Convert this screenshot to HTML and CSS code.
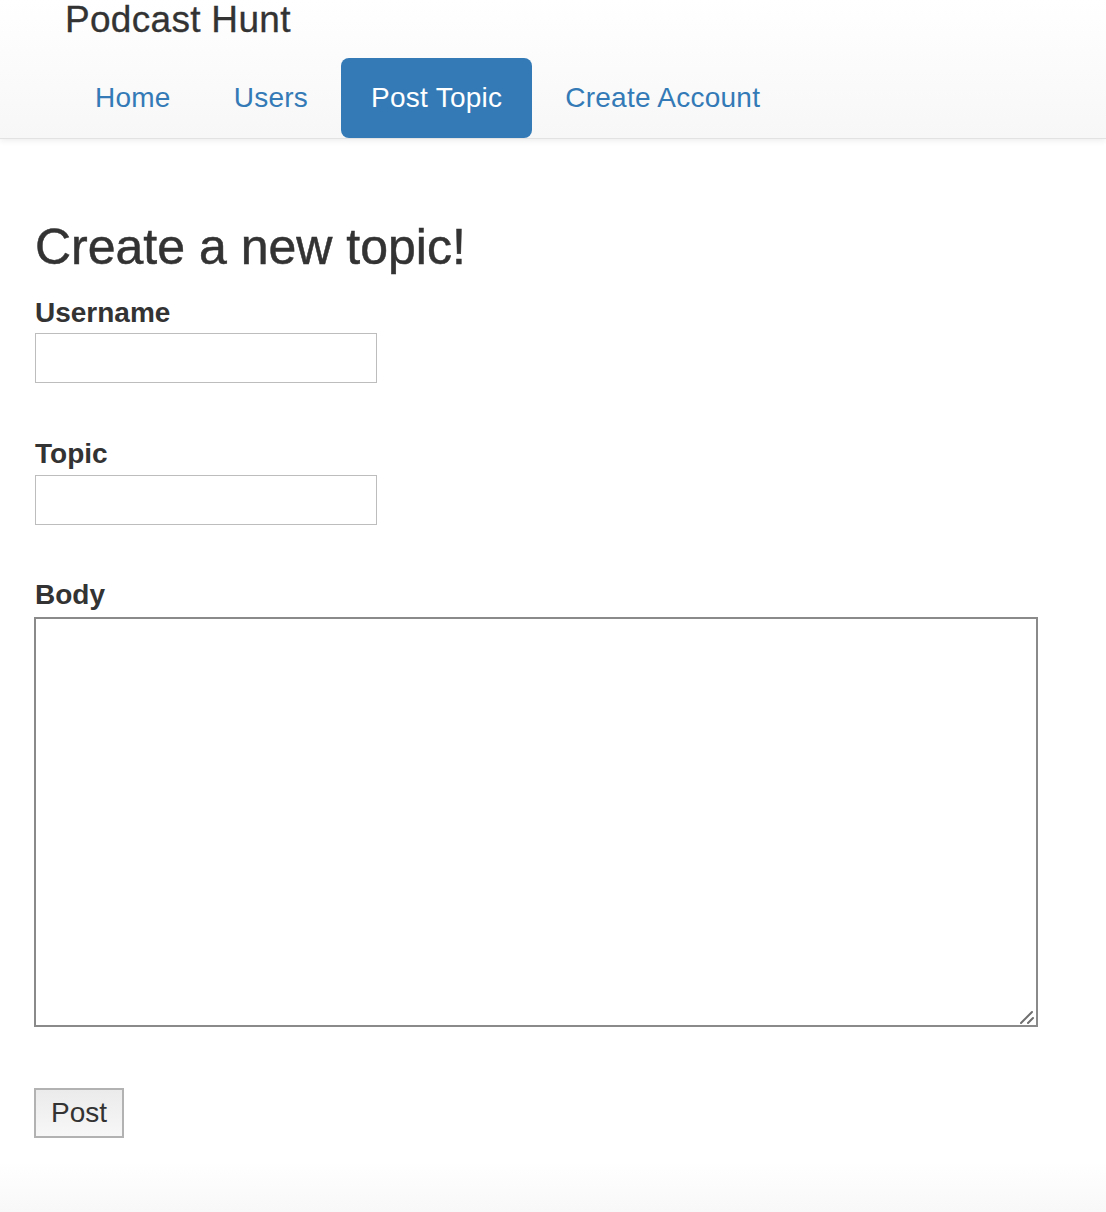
FILE: index.html
```html
<!DOCTYPE html>
<html lang="en">
<head>
<meta charset="utf-8">
<title>Podcast Hunt</title>
<link rel="stylesheet" href="styles.css">
</head>
<body>
<header class="navbar">
  <div class="brand">Podcast Hunt</div>
  <nav class="nav">
    <a class="nav-link" href="#">Home</a>
    <a class="nav-link" href="#">Users</a>
    <a class="nav-link active" href="#">Post Topic</a>
    <a class="nav-link" href="#">Create Account</a>
  </nav>
</header>
<main class="content">
  <h1 class="title">Create a new topic!</h1>
  <form class="topic-form">
    <label class="label first" for="username">Username</label>
    <input class="field" id="username" type="text">
    <label class="label" for="topic">Topic</label>
    <input class="field" id="topic" type="text">
    <label class="label body-label" for="body">Body</label>
    <div class="body-wrap">
      <textarea class="body-field" id="body"></textarea>
      <svg class="grip" width="14" height="14" viewBox="0 0 14 14" aria-hidden="true">
        <line x1="1" y1="13" x2="12" y2="2" stroke="#6f6f6f" stroke-width="2" stroke-linecap="round"/>
        <line x1="8" y1="13" x2="13" y2="8" stroke="#6f6f6f" stroke-width="2" stroke-linecap="round"/>
      </svg>
    </div>
    <button class="post-btn" type="submit">Post</button>
  </form>
</main>
<footer class="footer"></footer>
</body>
</html>
```

FILE: styles.css
```css
html, body {
  margin: 0;
  padding: 0;
  background: #fff;
}
body {
  font-family: "Liberation Sans", Arial, Helvetica, sans-serif;
  color: #333;
}
.navbar {
  height: 138px;
  background: linear-gradient(to bottom, #ffffff 0%, #f7f7f7 100%);
  border-bottom: 1px solid #e2e2e2;
  box-shadow: 0 2px 6px rgba(0, 0, 0, 0.07);
}
.brand {
  height: 58px;
  padding-left: 65px;
  font-size: 37px;
  line-height: 40px;
  letter-spacing: 0.3px;
  color: #333;
  -webkit-text-stroke: 0.3px #333;
}
.nav {
  display: flex;
  gap: 3px;
  padding-left: 65px;
}
.nav-link {
  display: block;
  padding: 20px 30px;
  font-size: 28px;
  line-height: 40px;
  letter-spacing: 0.25px;
  color: #337ab7;
  text-decoration: none;
  border-radius: 8px;
}
.nav-link.active {
  background: #337ab7;
  color: #fff;
}
.content {
  padding-left: 35px;
}
.title {
  margin: 81px 0 0;
  font-size: 50px;
  line-height: 55px;
  font-weight: normal;
  color: #333;
  -webkit-text-stroke: 0.5px #333;
}
.topic-form {
  display: flex;
  flex-direction: column;
  align-items: flex-start;
}
.label {
  display: block;
  margin-top: 51px;
  font-size: 28px;
  line-height: 40px;
  font-weight: bold;
  color: #333;
}
.label.first {
  margin-top: 18px;
}
.field {
  box-sizing: border-box;
  width: 342px;
  height: 50px;
  margin: 1px 0 0;
  border: 1px solid #bdbdbd;
  padding: 0 8px;
  font-size: 28px;
  background: #fff;
  outline: none;
}
.label.first + .field {
  margin-top: 0;
}
.label.body-label {
  margin-top: 50px;
}
.body-wrap {
  position: relative;
  margin: 2px 0 0 -1px;
  line-height: 0;
}
.body-field {
  display: block;
  box-sizing: border-box;
  width: 1004px;
  height: 410px;
  margin: 0;
  border: 2px solid #8a8a8a;
  padding: 4px;
  font-size: 28px;
  background: #fff;
  resize: none;
  outline: none;
}
.grip {
  position: absolute;
  right: 4px;
  bottom: 3px;
}
.post-btn {
  box-sizing: border-box;
  width: 90px;
  height: 50px;
  margin: 61px 0 0 -1px;
  padding: 0;
  border: 2px solid #b2b2b2;
  background: linear-gradient(to bottom, #ebebeb 0%, #f7f7f7 100%);
  font-family: "Liberation Sans", Arial, Helvetica, sans-serif;
  font-size: 28px;
  color: #333;
}
.footer {
  height: 50px;
  margin-top: 24px;
  background: linear-gradient(to bottom, #ffffff 0%, #f8f8f8 100%);
}
```
